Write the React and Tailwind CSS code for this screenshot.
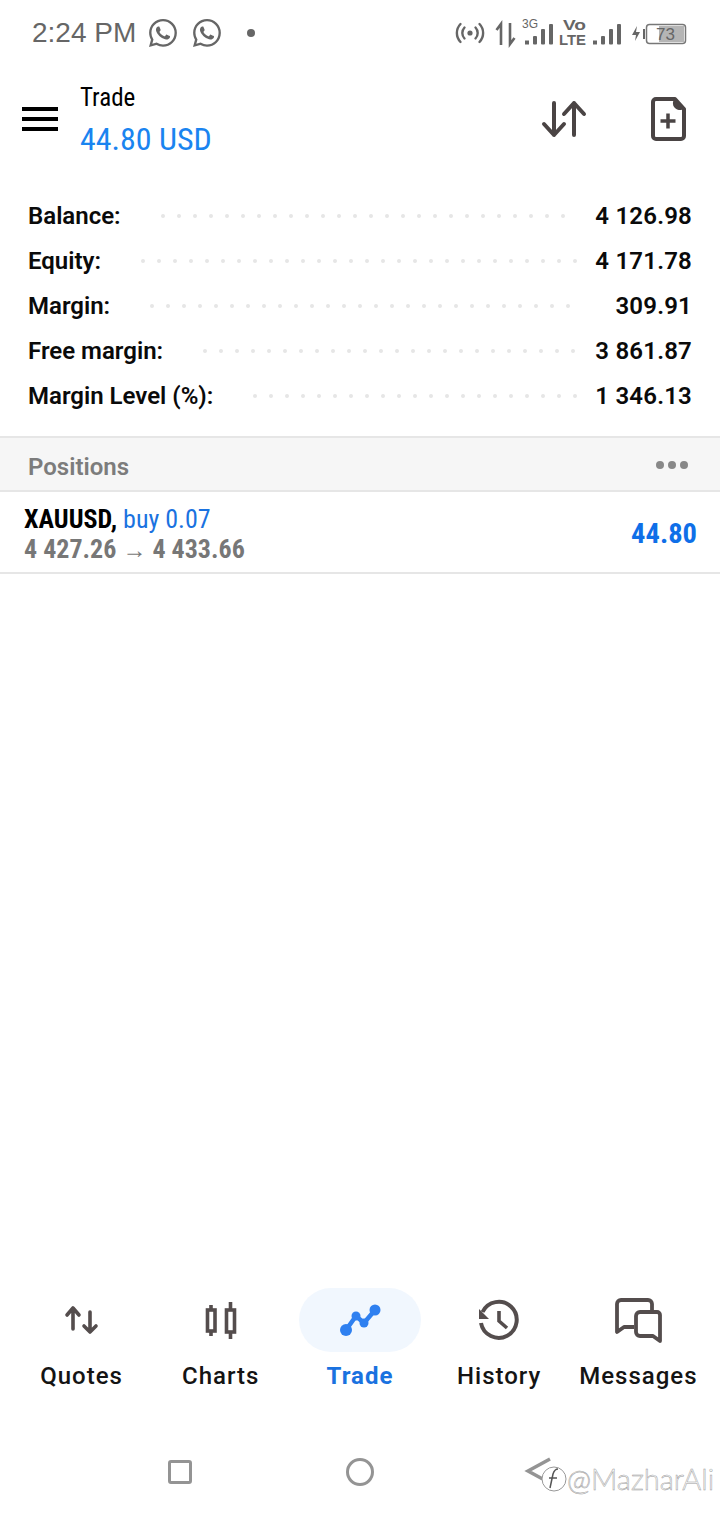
import { BsWhatsapp } from "react-icons/bs";

const stats = [
  { label: "Balance:", value: "4 126.98", dots: 26 },
  { label: "Equity:", value: "4 171.78", dots: 28 },
  { label: "Margin:", value: "309.91", dots: 27 },
  { label: "Free margin:", value: "3 861.87", dots: 24 },
  { label: "Margin Level (%):", value: "1 346.13", dots: 21 },
];

const StatusIcons = () => (
  <svg width="240" height="40" viewBox="450 12 240 40" fill="none">
    <g stroke="#666" strokeWidth="2.4" strokeLinecap="round">
      <circle cx="470" cy="32" r="2.6" fill="#666" stroke="none" />
      <path d="M464.500 26.500a8 8 0 0 0 0 11M475.500 26.500a8 8 0 0 1 0 11" />
      <path d="M460.500 23a13 13 0 0 0 0 18M479.500 23a13 13 0 0 1 0 18" />
    </g>
    <path d="M501 44V23l-4.500 6" stroke="#666" strokeWidth="2.6" />
    <path d="M510 22v21l4.500-6" stroke="#666" strokeWidth="2.6" />
    <text x="522" y="27" fontSize="12" fill="#666" fontFamily="Liberation Sans">3G</text>
    <g fill="#666">
      <rect x="525" y="39.500" width="4" height="4" />
      <rect x="533" y="35" width="4" height="8.500" rx="1" />
      <rect x="541" y="28" width="4" height="15.500" rx="1" />
      <rect x="549" y="23" width="4" height="20.500" rx="1" />
      <rect x="593" y="39.500" width="4" height="4" />
      <rect x="601" y="35" width="4" height="8.500" rx="1" />
      <rect x="609" y="28" width="4" height="15.500" rx="1" />
      <rect x="617" y="23" width="4" height="20.500" rx="1" />
      <path d="M637 25l-5 9h4l-1 6 5-9h-4z" />
      <rect x="643" y="28" width="2" height="10" />
    </g>
    <text x="563" y="28.500" fontSize="14" fontWeight="700" textLength="23" lengthAdjust="spacingAndGlyphs" fill="#666" fontFamily="Liberation Sans">Vo</text>
    <text x="559" y="44" fontSize="14" fontWeight="700" textLength="27" lengthAdjust="spacingAndGlyphs" fill="#666" fontFamily="Liberation Sans">LTE</text>
    <rect x="646.500" y="23.500" width="39" height="19" rx="3" stroke="#777" strokeWidth="1.500" />
    <rect x="659" y="25" width="25" height="16" fill="#b5b5b5" />
    <text x="656" y="39" fontSize="17" fill="#666" fontFamily="Liberation Sans">73</text>
  </svg>
);

const SortIcon = () => (
  <svg width="46" height="40" viewBox="541 100 46 40" fill="none" stroke="#4a4444" strokeWidth="4" strokeLinecap="round" strokeLinejoin="round">
    <path d="M554 104v32M544 125l10 11 10-11" />
    <path d="M574 136v-32M564 115l10-11 10 11" />
  </svg>
);

const NewDocIcon = () => (
  <svg width="36" height="46" viewBox="650 97 36 46" fill="none">
    <path d="M656 100h19l9 10v27a3 3 0 0 1-3 3h-25a3 3 0 0 1-3-3v-34a3 3 0 0 1 3-3z" stroke="#4a4444" strokeWidth="4" strokeLinejoin="round" />
    <path d="M674 100l10 10-3 1a7 7 0 0 1-8-8z" fill="#4a4444" />
    <path d="M668 114.500v15M660.500 122h15" stroke="#4a4444" strokeWidth="3.500" />
  </svg>
);

const QuotesIcon = () => (
  <svg width="40" height="44" viewBox="62 1298 40 44" fill="none" stroke="#544d4d" strokeWidth="3.600" strokeLinecap="round" strokeLinejoin="round">
    <path d="M73 1329v-21M67 1315l6-7 6 7" />
    <path d="M90 1312v20M84 1326l6 6 6-6" />
  </svg>
);

const ChartsIcon = () => (
  <svg width="40" height="44" viewBox="201 1298 40 44" fill="none" stroke="#544d4d" strokeWidth="3.600">
    <path d="M211 1305v5M211 1331v5M230.500 1302v8M230.500 1332v7" />
    <rect x="207.500" y="1310" width="7.500" height="21" />
    <rect x="226.500" y="1310" width="8" height="22" />
  </svg>
);

const TradeIcon = () => (
  <svg width="44" height="44" viewBox="338 1298 44 44" fill="#2f80f0" stroke="none">
    <path d="M346 1330l10-14 8 7 11-13" fill="none" stroke="#2f80f0" strokeWidth="4.500" />
    <circle cx="346" cy="1330" r="6" />
    <circle cx="356" cy="1316" r="4.500" />
    <circle cx="364" cy="1323" r="4.500" />
    <circle cx="375" cy="1310" r="5.500" />
  </svg>
);

const HistoryIcon = () => (
  <svg width="44" height="44" viewBox="477 1298 44 44" fill="none" stroke="#544d4d" strokeWidth="4">
    <path d="M482.500 1312a18 18 0 1 1-1.500 11" />
    <path d="M479 1309l0 10 10 0z" fill="#544d4d" stroke="none" />
    <path d="M499 1311v10l8 7" strokeWidth="3.600" />
  </svg>
);

const MessagesIcon = () => (
  <svg width="50" height="48" viewBox="613 1296 50 48" fill="none" stroke="#544d4d" strokeWidth="3.800" strokeLinejoin="round">
    <path d="M634 1327h-10l-7 5v-28a4 4 0 0 1 4-4h27a4 4 0 0 1 4 4v7" />
    <path d="M640 1312h17a3 3 0 0 1 3 3v26l-7-5h-13a4 4 0 0 1-4-4v-16a4 4 0 0 1 4-4z" />
  </svg>
);

const tabs = [
  { label: "Quotes", icon: <QuotesIcon /> },
  { label: "Charts", icon: <ChartsIcon /> },
  { label: "Trade", icon: <TradeIcon />, active: true },
  { label: "History", icon: <HistoryIcon /> },
  { label: "Messages", icon: <MessagesIcon /> },
];

const App = () => {
  return (
    <div className="relative flex h-[1520px] w-[720px] flex-col overflow-hidden bg-white font-['Roboto',sans-serif]">
      {/* status bar */}
      <div className="flex h-[66px] items-center pl-[32px] pr-[30px] text-[#666]">
        <span className="font-['Liberation_Sans',sans-serif] text-[28px]">2:24 PM</span>
        <BsWhatsapp className="ml-[13px] text-[28px]" />
        <BsWhatsapp className="ml-[16px] text-[28px]" />
        <span className="ml-[26px] h-2 w-2 rounded-full bg-[#666]" />
        <span className="ml-auto">
          <StatusIcons />
        </span>
      </div>

      {/* header */}
      <div className="flex h-[106px] items-center pl-[22px] pr-[34px]">
        <div className="flex w-9 flex-col gap-[6px]">
          <span className="h-1 bg-black" />
          <span className="h-1 bg-black" />
          <span className="h-1 bg-black" />
        </div>
        <div className="ml-[22px] flex flex-col pt-[2px] [font-stretch:75%]">
          <span className="text-[25px] leading-[32px] text-black">Trade</span>
          <span className="mt-[5px] text-[32px] leading-[40px] text-[#1a84f0]">44.80 USD</span>
        </div>
        <div className="ml-auto flex items-center gap-[63px]">
          <SortIcon />
          <NewDocIcon />
        </div>
      </div>

      {/* account stats */}
      <div className="flex h-[264px] flex-col pl-[28px] pr-[28px] pt-[21px]">
        {stats.map((row) => (
          <div key={row.label} className="flex h-[45px] items-center text-[24px] font-semibold text-[#0a0a0a]">
            <span>{row.label}</span>
            <div className="ml-[40px] flex flex-1 gap-3">
              {Array.from({ length: row.dots }).map((_, i) => (
                <span key={i} className="h-1 w-1 rounded-full bg-[#e6e6e6]" />
              ))}
            </div>
            <span className="tracking-[0.2px]">{row.value}</span>
          </div>
        ))}
      </div>

      {/* positions */}
      <div className="flex h-[56px] items-center justify-between border-y-2 border-[#e6e6e6] bg-[#f6f6f6] pl-[28px] pr-[32px]">
        <span className="pt-[5px] text-[24px] font-semibold text-[#7c7c7c]">Positions</span>
        <div className="flex gap-1 pt-[2px]">
          <span className="h-2 w-2 rounded-full bg-[#888]" />
          <span className="h-2 w-2 rounded-full bg-[#888]" />
          <span className="h-2 w-2 rounded-full bg-[#888]" />
        </div>
      </div>
      <div className="flex h-[82px] items-center justify-between border-b-2 border-[#e6e6e6] pl-[24px] pr-[23px] pt-[4px] [font-stretch:75%]">
        <div className="flex flex-col text-[26px] leading-[30px]">
          <div>
            <span className="font-bold text-black">XAUUSD, </span>
            <span className="text-[#1a72e0]">buy 0.07</span>
          </div>
          <div className="font-bold text-[#777]">
            4 427.26 <span className="text-[24px] font-normal">→</span> 4 433.66
          </div>
        </div>
        <span className="text-[28.5px] font-bold text-[#0f6fe8]">44.80</span>
      </div>

      <div className="flex-1" />

      {/* bottom tabs */}
      <div className="grid grid-cols-5 px-[12px]">
        {tabs.map((tab) => (
          <div key={tab.label} className="flex flex-col items-center">
            <div className={`flex h-16 w-[122px] items-center justify-center rounded-full ${tab.active ? "bg-[#f1f7fe]" : ""}`}>
              {tab.icon}
            </div>
            <span className={`mt-[7px] text-[24px] leading-[34px] tracking-[1px] ${tab.active ? "font-bold text-[#1a72e0]" : "font-medium text-[#141414]"}`}>
              {tab.label}
            </span>
          </div>
        ))}
      </div>

      {/* android nav */}
      <div className="h-[127px] pt-[64px]">
        <div className="grid w-full grid-cols-3 items-center justify-items-center">
          <span className="h-6 w-6 translate-x-[60px] rounded-[3px] border-[3.5px] border-[#949494]" />
          <span className="h-7 w-7 rounded-full border-[3.5px] border-[#949494]" />
          <svg width="30" height="30" viewBox="0 0 30 30" fill="none" stroke="#949494" strokeWidth="3.500" className="-translate-x-[61px]">
            <path d="M26 2L4 14l22 12" />
          </svg>
        </div>
      </div>

      {/* watermark */}
      <div className="absolute left-[542px] top-[1456px] flex items-center">
        <svg width="25" height="46" viewBox="0 0 25 46" fill="white" stroke="#999" strokeWidth="1">
          <circle cx="12" cy="23" r="12" />
          <path d="M16 13c-3 0-4 2-5 5l-3 14M7 22h8" fill="none" stroke="#555" strokeWidth="1.500" />
        </svg>
        <span className="font-['Lato',sans-serif] text-[29px] font-light text-white [-webkit-text-stroke:0.5px_#999]">
          @MazharAli
        </span>
      </div>
    </div>
  );
};

export default App;
